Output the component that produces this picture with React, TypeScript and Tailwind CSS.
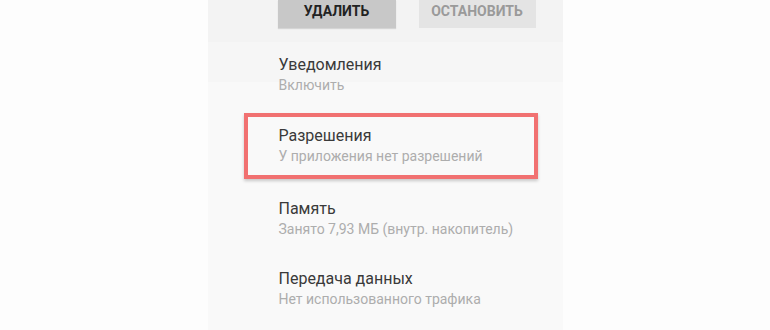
import React from "react";

type Row = { title: string; sub: string; h: string; highlight?: boolean };

const rows: Row[] = [
  { title: "Уведомления", sub: "Включить", h: "h-[71px]" },
  { title: "Разрешения", sub: "У приложения нет разрешений", h: "h-[73px]", highlight: true },
  { title: "Память", sub: "Занято 7,93 МБ (внутр. накопитель)", h: "h-[70px]" },
  { title: "Передача данных", sub: "Нет использованного трафика", h: "h-[70px]" },
];

export default function App() {
  return (
    <div
      className="w-[770px] h-[330px] overflow-hidden bg-[#fdfdfd] flex justify-center"
      style={{ fontFamily: "Roboto, 'Noto Sans', sans-serif" }}
    >
      <div className="w-[355px] h-full bg-[#f9f9f9] flex flex-col">
        <div className="h-[42px] shrink-0 bg-[#f3f3f3] pl-[70px] flex items-start gap-[23px]">
          <div className="w-[118px] h-[28px] bg-[#c8c8c8] shadow-[0_1px_1px_rgba(0,0,0,0.12)] flex justify-center pt-[3px] text-[14px] leading-[16px] font-bold text-[#222]">
            УДАЛИТЬ
          </div>
          <div className="w-[117px] h-[28px] bg-[#e4e4e4] flex justify-center pt-[3px] text-[14px] leading-[16px] font-bold text-[#9a9a9a]">
            ОСТАНОВИТЬ
          </div>
        </div>
        <div className="flex flex-col pt-[13px] bg-[linear-gradient(to_bottom,#f6f6f6_40px,#f9f9f9_40px)]">
          {rows.map((r) => (
            <div key={r.title} className={`relative ${r.h} shrink-0 pl-[71px]`}>
              {r.highlight && (
                <div className="absolute left-[36px] top-[-13px] w-[294px] h-[66px] border-[4px] border-[#f17171] shadow-[0_2px_3px_rgba(0,0,0,0.2)]" />
              )}
              <div className="text-[16px] leading-[20px] text-[#3a3a3a]">{r.title}</div>
              <div className="mt-[1px] text-[14px] leading-[18px] text-[#adadad]">{r.sub}</div>
            </div>
          ))}
        </div>
      </div>
    </div>
  );
}
